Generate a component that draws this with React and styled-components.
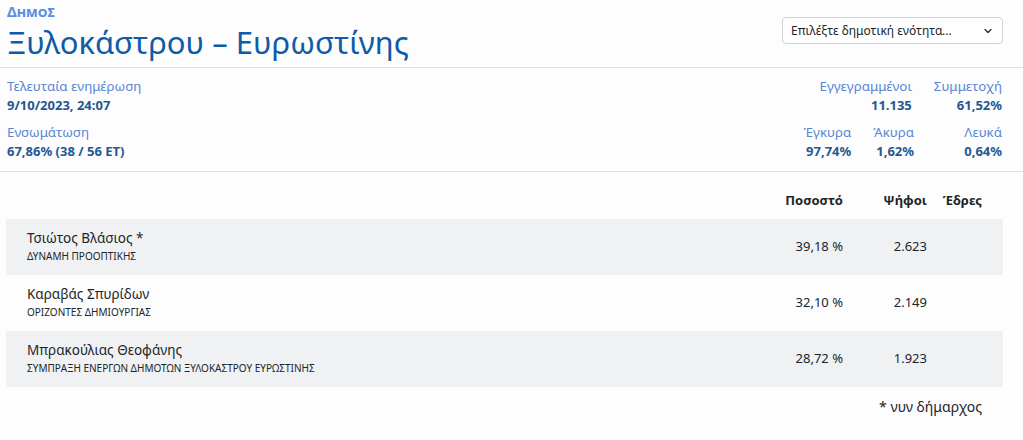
import React from "react";
import styled, { createGlobalStyle } from "styled-components";

const Global = createGlobalStyle`
  html, body { margin: 0; padding: 0; background: #fdfdfd; }
  body { font-family: "Noto Sans", "Open Sans", sans-serif; color: #212529; }
  * { box-sizing: border-box; }
`;

const Page = styled.div`
  width: 1023px;
  padding: 0 20px 0 6px;
`;

const Header = styled.header`
  display: flex;
  justify-content: space-between;
  align-items: flex-start;
  height: 68px;
  margin: 0 -20px 0 -6px;
  padding: 0 20px 0 7px;
  border-bottom: 1px solid #dee2e6;
`;

const TitleBlock = styled.div`
  display: flex;
  flex-direction: column;
  padding-top: 3px;
`;

const Kicker = styled.div`
  font-size: 14.5px;
  font-weight: 700;
  font-variant: small-caps;
  color: #5b8ee0;
  line-height: 16px;
`;

const Title = styled.h1`
  margin: 4px 0 0;
  font-size: 31px;
  font-weight: 400;
  color: #0e5ba8;
  line-height: 38px;
`;

const SelectBox = styled.div`
  margin-top: 17px;
  width: 221px;
  height: 27px;
  border: 1px solid #ced4da;
  border-radius: 4px;
  background: #fff;
  display: flex;
  align-items: center;
  justify-content: space-between;
  padding: 0 9px 0 8px;
  font-size: 12px;
  color: #212529;
`;

const Stats = styled.section`
  display: flex;
  justify-content: space-between;
  margin: 0 -20px 0 -6px;
  padding: 9px 21px 10px 7px;
  border-bottom: 1px solid #dee2e6;
`;

const StatCol = styled.div`
  display: flex;
  flex-direction: column;
  gap: 8px;
`;

const StatRow = styled.div`
  display: flex;
  justify-content: flex-end;
  gap: 22px;
`;

const Stat = styled.div`
  display: flex;
  flex-direction: column;
  align-items: ${(p) => (p.$right ? "flex-end" : "flex-start")};
  min-width: ${(p) => p.$w || 0}px;
`;

const Label = styled.span`
  font-size: 13.3px;
  color: #5a86d4;
  line-height: 19px;
`;

const Value = styled.span`
  font-size: 13px;
  font-weight: 700;
  color: #245892;
  line-height: 19px;
`;

const Table = styled.div`
  display: flex;
  flex-direction: column;
`;

const Grid = styled.div`
  display: grid;
  grid-template-columns: 1fr 120px 84px 76px;
  align-items: center;
  background: ${(p) => (p.$shade ? "#f0f1f3" : "transparent")};
`;

const HeadRow = styled(Grid)`
  padding: 19px 0 9px;
`;

const BodyRow = styled(Grid)`
  padding: 9px 0 10px;
  min-height: 55.7px;
`;

const HeadCell = styled.div`
  font-size: 13px;
  font-weight: 700;
  line-height: 19px;
  text-align: right;
  padding-right: ${(p) => (p.$last ? "21px" : "0")};
`;

const NameCell = styled.div`
  padding-left: 21px;
  display: flex;
  flex-direction: column;
`;

const Name = styled.span`
  font-size: 13.5px;
  line-height: 20px;
  color: #212529;
`;

const Party = styled.span`
  font-size: 10px;
  line-height: 17px;
  text-transform: uppercase;
  color: #212529;
`;

const NumCell = styled.div`
  font-size: 13px;
  line-height: 19px;
  text-align: right;
  color: #212529;
`;

const Note = styled.div`
  text-align: right;
  padding: 10px 21px 0 0;
  font-size: 14px;
  line-height: 20px;
`;

const Chevron = () => (
  <svg width="10" height="8" viewBox="0 0 16 16" aria-hidden="true">
    <path d="M2 5l6 6 6-6" fill="none" stroke="#343a40" strokeWidth="3" strokeLinecap="round" strokeLinejoin="round" />
  </svg>
);

const candidates = [
  { name: "Τσιώτος Βλάσιος *", party: "Δυναμη Προοπτικης", pct: "39,18 %", votes: "2.623" },
  { name: "Καραβάς Σπυρίδων", party: "Οριζοντες Δημιουργιας", pct: "32,10 %", votes: "2.149" },
  { name: "Μπρακούλιας Θεοφάνης", party: "Συμπραξη Ενεργων Δημοτων Ξυλοκαστρου Ευρωστινης", pct: "28,72 %", votes: "1.923" },
];

export default function App() {
  return (
    <>
      <Global />
      <Page>
        <Header>
          <TitleBlock>
            <Kicker>Δήμος</Kicker>
            <Title>Ξυλοκάστρου – Ευρωστίνης</Title>
          </TitleBlock>
          <SelectBox>
            <span>Επιλέξτε δημοτική ενότητα...</span>
            <Chevron />
          </SelectBox>
        </Header>
        <Stats>
          <StatCol>
            <Stat>
              <Label>Τελευταία ενημέρωση</Label>
              <Value>9/10/2023, 24:07</Value>
            </Stat>
            <Stat>
              <Label>Ενσωμάτωση</Label>
              <Value>67,86% (38 / 56 ΕΤ)</Value>
            </Stat>
          </StatCol>
          <StatCol>
            <StatRow>
              <Stat $right>
                <Label>Εγγεγραμμένοι</Label>
                <Value>11.135</Value>
              </Stat>
              <Stat $right $w={66}>
                <Label>Συμμετοχή</Label>
                <Value>61,52%</Value>
              </Stat>
            </StatRow>
            <StatRow>
              <Stat $right>
                <Label>Έγκυρα</Label>
                <Value>97,74%</Value>
              </Stat>
              <Stat $right>
                <Label>Άκυρα</Label>
                <Value>1,62%</Value>
              </Stat>
              <Stat $right $w={66}>
                <Label>Λευκά</Label>
                <Value>0,64%</Value>
              </Stat>
            </StatRow>
          </StatCol>
        </Stats>
        <Table>
          <HeadRow>
            <div />
            <HeadCell>Ποσοστό</HeadCell>
            <HeadCell>Ψήφοι</HeadCell>
            <HeadCell $last>Έδρες</HeadCell>
          </HeadRow>
          {candidates.map((c, i) => (
            <BodyRow key={c.name} $shade={i % 2 === 0}>
              <NameCell>
                <Name>{c.name}</Name>
                <Party>{c.party}</Party>
              </NameCell>
              <NumCell>{c.pct}</NumCell>
              <NumCell>{c.votes}</NumCell>
              <NumCell />
            </BodyRow>
          ))}
        </Table>
        <Note>* νυν δήμαρχος</Note>
      </Page>
    </>
  );
}
